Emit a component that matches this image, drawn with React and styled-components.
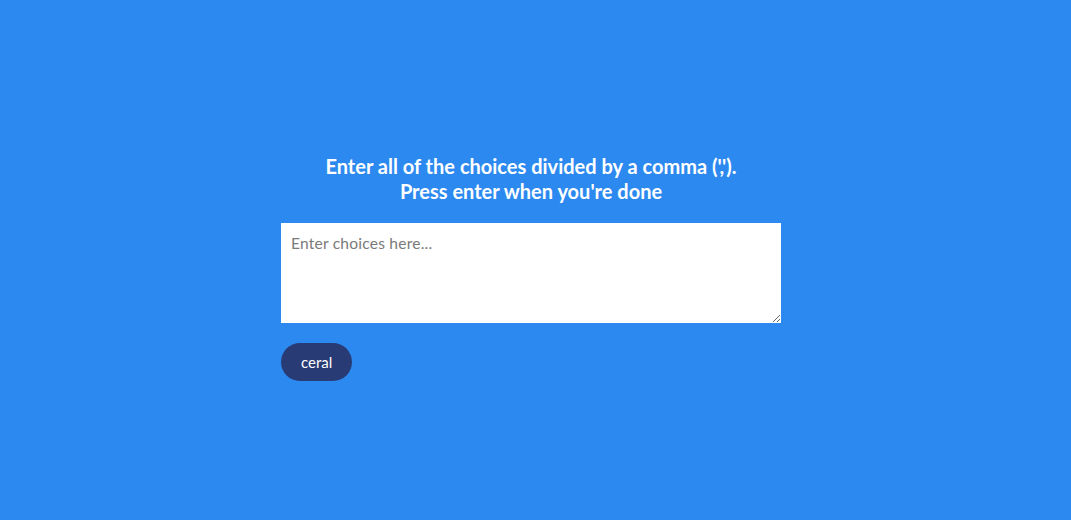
import React from "react";
import styled, { createGlobalStyle } from "styled-components";

const GlobalStyle = createGlobalStyle`
  html, body {
    margin: 0;
    padding: 0;
    background: #2c89f0;
  }
  body {
    font-family: "Lato", "Noto Sans", sans-serif;
  }
`;

const Page = styled.div`
  min-height: 520px;
  padding: 154px 9px 0 0;
  box-sizing: border-box;
`;

const Panel = styled.div`
  width: 500px;
  margin: 0 auto;
  display: flex;
  flex-direction: column;
`;

const Heading = styled.h2`
  margin: 0 0 19px;
  color: #fff;
  font-size: 20px;
  font-weight: 700;
  line-height: 25px;
  text-align: center;
`;

const ChoicesInput = styled.textarea`
  width: 500px;
  height: 100px;
  box-sizing: border-box;
  border: none;
  outline: none;
  padding: 11px 10px;
  font-family: inherit;
  font-size: 15.6px;
  letter-spacing: 0.2px;
  color: #333;
  background: #fff;

  &::placeholder {
    color: #7a7a7a;
  }
`;

const Button = styled.button`
  align-self: flex-start;
  margin-top: 20px;
  height: 38px;
  padding: 0 20px;
  border: none;
  border-radius: 19px;
  background: #283b74;
  color: #fff;
  font-family: inherit;
  font-size: 15px;
  cursor: pointer;
`;

export default function App() {
  return (
    <Page>
      <GlobalStyle />
      <Panel>
        <Heading>
          Enter all of the choices divided by a comma (',').
          <br />
          Press enter when you're done
        </Heading>
        <ChoicesInput placeholder="Enter choices here..." />
        <Button>ceral</Button>
      </Panel>
    </Page>
  );
}
